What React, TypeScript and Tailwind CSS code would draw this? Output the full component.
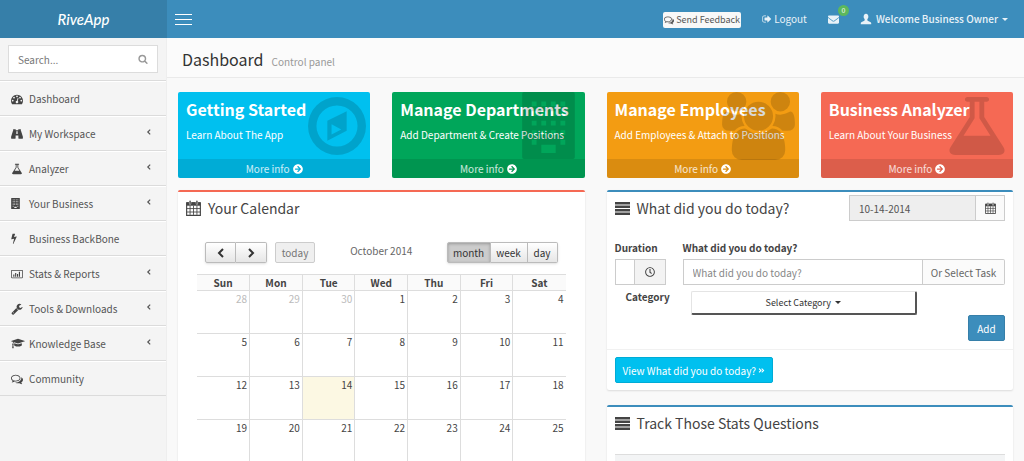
import type { ReactNode } from "react";
import { FaAngleDoubleRight, FaArrowCircleRight, FaEnvelope, FaRegClock } from "react-icons/fa";

const PATHS = {
  tachometer:
    "M384 1152q0-53-37.5-90.5t-90.5-37.5-90.5 37.5-37.5 90.5 37.5 90.5 90.5 37.5 90.5-37.5 37.5-90.5zm192-448q0-53-37.5-90.5t-90.5-37.5-90.5 37.5-37.5 90.5 37.5 90.5 90.5 37.5 90.5-37.5 37.5-90.5zm428 481l101-382q6-26-7.5-48.5t-38.5-29.5-48 6.5-30 39.5l-101 382q-60 5-107 43.5t-63 98.5q-20 77 20 146t117 89 146-20 89-117q16-60-6-117t-72-91zm660-33q0-53-37.5-90.5t-90.5-37.5-90.5 37.5-37.5 90.5 37.5 90.5 90.5 37.5 90.5-37.5 37.5-90.5zm-640-640q0-53-37.5-90.5t-90.5-37.5-90.5 37.5-37.5 90.5 37.5 90.5 90.5 37.5 90.5-37.5 37.5-90.5zm448 192q0-53-37.5-90.5t-90.5-37.5-90.5 37.5-37.5 90.5 37.5 90.5 90.5 37.5 90.5-37.5 37.5-90.5zm320 448q0 261-141 483-19 29-54 29h-1402q-35 0-54-29-141-221-141-483 0-182 71-348t191-286 286-191 348-71 348 71 286 191 191 286 71 348z",
  binoculars:
    "M320 192h384v160h384v-160h384v210q30 20 44 70l260 820v244q0 64-64 64h-544q-64 0-64-64v-416h-416v416q0 64-64 64h-544q-64 0-64-64v-244l260-820q14-50 44-70zM800 480v400h192v-400z",
  flask:
    "M1591 1448q56 89 21.5 152.5t-140.5 63.5h-1152q-106 0-140.5-63.5t21.5-152.5l503-793v-399h-64q-26 0-45-19t-19-45 19-45 45-19h512q26 0 45 19t19 45-19 45-45 19h-64v399zm-779-725l-272 429h712l-272-429-20-31v-436h-128v436z",
  bolt: "M1333 566q18 20 7 44l-540 1157q-13 25-42 25-4 0-14-2-17-5-25.5-19t-4.5-30l197-808-406 101q-4 1-12 1-18 0-31-11-18-15-13-39l201-825q4-14 16-23t28-9h328q19 0 32 12.5t13 29.5q0 8-5 18l-171 463 396-98q8-2 12-2 19 0 34 15z",
  chart:
    "M160 256h1728q66 0 113 47t47 113v1088q0 66-47 113t-113 47h-1728q-66 0-113-47t-47-113v-1088q0-66 47-113t113-47zM160 384q-32 0-32 32v1088q0 32 32 32h1728q32 0 32-32v-1088q0-32-32-32zM384 1056h192v352h-192zM704 800h192v608h-192zM1024 960h192v448h-192zM1344 576h192v832h-192z",
  wrench:
    "M448 1472q0-26-19-45t-45-19-45 19-19 45 19 45 45 19 45-19 19-45zm644-420l-682 682q-37 37-90 37-52 0-91-37l-106-108q-38-36-38-90 0-53 38-91l681-681q39 98 114.5 173.5t173.5 114.5zm634-435q0 39-23 106-47 134-164.5 217.5t-258.5 83.5q-185 0-316.5-131.5t-131.5-316.5 131.5-316.5 316.5-131.5q58 0 121.5 16.5t107.5 46.5q16 11 16 28t-16 28l-293 169v224l193 107q5-3 79-48.5t135.5-81 70.5-35.5q15 0 23.5 10t8.5 25z",
  graduation:
    "M1774 836l18 316q4 69-82 128t-235 93.5-323 34.5-323-34.5-235-93.5-82-128l18-316 574 181q22 7 48 7t48-7zm530-324q0 23-22 31l-1120 352q-4 1-10 1t-10-1l-652-206q-43 34-71 111.5t-34 178.5q63 36 63 109 0 69-58 107l58 433q2 14-8 25-9 11-24 11h-192q-15 0-24-11-10-11-8-25l58-433q-58-38-58-107 0-73 65-111 11-207 98-330l-333-104q-22-8-22-31t22-31l1120-352q4-1 10-1t10 1l1120 352q22 8 22 31z",
  comments:
    "M704 384q-153 0-286 52t-211.5 141-78.5 191q0 82 53 158t149 132l97 56-35 84q34-20 62-39l44-31 53 10q78 14 153 14 153 0 286-52t211.5-141 78.5-191-78.5-191-211.5-141-286-52zm0-128q191 0 353.5 68.5t256.5 186.5 94 257-94 257-256.5 186.5-353.5 68.5q-86 0-176-16-124 88-278 128-36 9-86 16h-3q-11 0-20.5-8t-11.5-21q-1-3-1-6.5t.5-6.5 2-6l2.5-5 3.5-5.5 4-5 4.5-5 4-4.5q5-6 23-25t26-29.5 22.5-29 25-38.5 20.5-44q-124-72-195-177t-71-224q0-139 94-257t256.5-186.5 353.5-68.5zm822 1169q10 24 20.5 44t25 38.5 22.5 29 26 29.5 23 25q1 1 4 4.5t4.5 5 4 5 3.5 5.5l2.5 5 2 6 .5 6.5-1 6.5q-3 14-13 22t-22 7q-50-7-86-16-154-40-278-128-90 16-176 16-271 0-472-132 58 4 88 4 161 0 309-45t264-129q125-92 192-212t67-254q0-77-23-152 129 71 204 178t75 230q0 120-71 224.5t-195 176.5z",
  search:
    "M1216 832q0-185-131.5-316.5t-316.5-131.5-316.5 131.5-131.5 316.5 131.5 316.5 316.5 131.5 316.5-131.5 131.5-316.5zm512 832q0 52-38 90t-90 38q-54 0-90-38l-343-342q-179 124-399 124-143 0-273.5-55.5t-225-150-150-225-55.5-273.5 55.5-273.5 150-225 225-150 273.5-55.5 273.5 55.5 225 150 150 225 55.5 273.5q0 220-124 399l343 343q37 37 37 90z",
  signOut:
    "M704 1440q0 4 1 20t.5 26.5-3 23.5-10 19.5-20.5 6.5h-320q-119 0-203.5-84.5t-84.5-203.5v-704q0-119 84.5-203.5t203.5-84.5h320q13 0 22.5 9.5t9.5 22.5q0 4 1 20t.5 26.5-3 23.5-10 19.5-20.5 6.5h-320q-66 0-113 47t-47 113v704q0 66 47 113t113 47h312l11.5 1 11.5 3 8 5.5 7 9 2 13.5zm928-544q0 26-19 45l-544 544q-19 19-45 19t-45-19-19-45v-288h-448q-26 0-45-19t-19-45v-384q0-26 19-45t45-19h448v-288q0-26 19-45t45-19 45 19l544 544q19 19 19 45z",
  users:
    "M593 896q-162 5-265 128h-134q-82 0-138-40.5t-56-118.5q0-353 124-353 6 0 43.5 21t97.5 42.5 119 21.5q67 0 133-23-5 37-5 66 0 139 81 256zm1071 637q0 120-73 189.5t-194 69.5h-874q-121 0-194-69.5t-73-189.5q0-53 3.5-103.5t14-109 26.5-108.5 43-97.5 62-81 85.5-53.5 111.5-20q10 0 43 21.5t73 48 107 48 135 21.5 135-21.5 107-48 73-48 43-21.5q61 0 111.5 20t85.5 53.5 62 81 43 97.5 26.5 108.5 14 109 3.5 103.5zm-1024-1277q0 106-75 181t-181 75-181-75-75-181 75-181 181-75 181 75 75 181zm704 384q0 159-112.5 271.5t-271.5 112.5-271.5-112.5-112.5-271.5 112.5-271.5 271.5-112.5 271.5 112.5 112.5 271.5zm576 225q0 78-56 118.5t-138 40.5h-134q-103-123-265-128 81-117 81-256 0-29-5-66 66 23 133 23 59 0 119-21.5t97.5-42.5 43.5-21q124 0 124 353zm-128-609q0 106-75 181t-181 75-181-75-75-181 75-181 181-75 181 75 75 181z",
  compass:
    "M128 896a768 768 0 1 0 1536 0a768 768 0 1 0-1536 0zM352 896a544 544 0 1 1 1088 0a544 544 0 1 1-1088 0zM1152 504v520l-512 264v-528zM752 850v270l256-132z",
  bust: "M896 128q180 0 272 120t80 300q-10 150-60 250t-92 150v150q20 60 200 130t300 150q80 60 80 180v106h-1560v-106q0-120 80-180 120-80 300-150t200-130v-150q-42-50-92-150t-60-250q-12-180 80-300t272-120z",
};

type Glyph = keyof typeof PATHS;

function Icon({ name, className, viewBox = "0 0 1792 1792" }: { name: Glyph; className: string; viewBox?: string }) {
  return (
    <svg viewBox={viewBox} className={className} fill="currentColor" fillRule="evenodd" aria-hidden="true">
      <path d={PATHS[name]} />
    </svg>
  );
}

function Building({ className }: { className: string }) {
  const columns = [256, 512, 768, 1024];
  const rows = [256, 512, 768, 1024, 1280];
  const windows = rows.flatMap((y) =>
    columns.filter((x) => y < 1280 || x === 256 || x === 1024).map((x) => `M${x} ${y}h128v128h-128z`),
  );
  return (
    <svg viewBox="0 0 1408 1792" className={className} fill="currentColor" fillRule="evenodd" aria-hidden="true">
      <path d={`M48 0h1312q48 0 48 48v1696q0 48-48 48h-1312q-48 0-48-48v-1696q0-48 48-48zM512 1408h384v224h-384z${windows.join("")}`} />
    </svg>
  );
}

function CalendarIcon({ className }: { className: string }) {
  return (
    <svg viewBox="0 0 26 28" className={className} aria-hidden="true">
      <path fill="none" stroke="currentColor" strokeWidth="2" d="M1 5h24v22H1z" />
      <path fill="none" stroke="currentColor" strokeWidth="1.500" d="M1 15h24M1 21h24M7 10v16M13 10v16M19 10v16" />
      <path fill="currentColor" d="M1 4h24v6H1z" />
      <path stroke="#fff" strokeWidth="4" strokeLinecap="round" d="M7 3v3M19 3v3" />
      <path stroke="currentColor" strokeWidth="2.500" strokeLinecap="round" d="M7 2v4M19 2v4" />
    </svg>
  );
}

function Bars({ className }: { className: string }) {
  return (
    <svg viewBox="0 0 15 13" className={className} fill="currentColor" aria-hidden="true">
      <path d="M0 0h15v2.500H0zM0 3.500h15v2.500H0zM0 7h15v2.500H0zM0 10.500h15v2.500H0z" />
    </svg>
  );
}

function Chevron({ right = false, className }: { right?: boolean; className: string }) {
  return (
    <svg viewBox="0 0 10 10" className={className} fill="none" stroke="currentColor" strokeWidth="2" aria-hidden="true">
      <path d={right ? "M3 1l4 4-4 4" : "M7 1L3 5l4 4"} />
    </svg>
  );
}

function Caret() {
  return (
    <svg viewBox="0 0 6 3" className="h-[3px] w-[6px]" fill="currentColor" aria-hidden="true">
      <path d="M0 0h6L3 3z" />
    </svg>
  );
}

const small = "h-3 w-3";
const MENU: { label: string; icon: ReactNode; open?: boolean }[] = [
  { label: "Dashboard", icon: <Icon name="tachometer" className={small} /> },
  { label: "My Workspace", icon: <Icon name="binoculars" className={small} />, open: true },
  { label: "Analyzer", icon: <Icon name="flask" className={small} />, open: true },
  { label: "Your Business", icon: <Building className="h-[11px] w-[9px]" />, open: true },
  { label: "Business BackBone", icon: <Icon name="bolt" viewBox="448 0 896 1792" className="h-[11px] w-[6px]" /> },
  { label: "Stats & Reports", icon: <Icon name="chart" viewBox="0 128 2048 1664" className="h-[10px] w-3" />, open: true },
  { label: "Tools & Downloads", icon: <Icon name="wrench" className={small} />, open: true },
  { label: "Knowledge Base", icon: <Icon name="graduation" viewBox="0 0 2304 1792" className="h-[11px] w-[14px]" />, open: true },
  { label: "Community", icon: <Icon name="comments" className={small} /> },
];

const ghost = "text-black/15";
const CARDS = [
  {
    title: "Getting Started",
    text: "Learn About The App",
    color: "bg-[#00c0ef]",
    icon: <Icon name="compass" viewBox="128 128 1536 1536" className={`${ghost} absolute right-1 top-[5px] h-[58px] w-[58px]`} />,
  },
  {
    title: "Manage Departments",
    text: "Add Department & Create Positions",
    color: "bg-[#00a65a]",
    icon: <Building className={`${ghost} absolute right-[10px] top-0 h-[67px] w-[53px]`} />,
  },
  {
    title: "Manage Employees",
    text: "Add Employees & Attach to Positions",
    color: "bg-[#f39c12]",
    icon: <Icon name="users" viewBox="0 0 1920 1792" className={`${ghost} absolute right-1 top-0 h-[68px] w-[73px]`} />,
  },
  {
    title: "Business Analyzer",
    text: "Learn About Your Business",
    color: "bg-[#f56954]",
    icon: <Icon name="flask" viewBox="128 128 1536 1536" className={`${ghost} absolute right-[7px] top-[5px] h-[58px] w-[58px]`} />,
  },
];

const DAYS = ["Sun", "Mon", "Tue", "Wed", "Thu", "Fri", "Sat"];
const WEEKS = [
  [28, 29, 30, 1, 2, 3, 4],
  [5, 6, 7, 8, 9, 10, 11],
  [12, 13, 14, 15, 16, 17, 18],
  [19, 20, 21, 22, 23, 24, 25],
];

function Panel({ title, icon, accent, tools, children }: { title: string; icon: ReactNode; accent: string; tools?: ReactNode; children: ReactNode }) {
  return (
    <section className={`rounded-xs border-t-2 bg-white shadow-[0_1px_2px_rgba(0,0,0,0.12)] ${accent}`}>
      <div className="flex h-[32px] items-center gap-[7px] px-2">
        <span className="flex w-[15px] justify-center text-[#444]">{icon}</span>
        <h3 className="flex-1 text-[14px]/[20px] text-[#444]">{title}</h3>
        {tools}
      </div>
      {children}
    </section>
  );
}

const calButton = "flex h-[21px] items-center justify-center border-[#bbb] text-[10px]/[19px] text-[#333]";
const raised = "bg-linear-to-b from-white to-[#e6e6e6]";

function Calendar() {
  return (
    <div className="px-[19px] pb-[10px] pt-[18px]">
      <div className="flex items-center justify-between px-2">
        <div className="flex flex-1 gap-2">
          <div className="flex rounded-xs shadow-sm">
            <button type="button" aria-label="Previous month" className={`${calButton} ${raised} w-[31px] rounded-l-xs border`}>
              <Chevron className="h-[10px] w-[10px]" />
            </button>
            <button type="button" aria-label="Next month" className={`${calButton} ${raised} w-[31px] rounded-r-xs border border-l-0`}>
              <Chevron right className="h-[10px] w-[10px]" />
            </button>
          </div>
          <button type="button" className="h-[21px] w-10 rounded-xs border border-[#ccc] bg-[#efefef] text-[10px]/[19px] text-[#777]">
            today
          </button>
        </div>
        <h2 className="pb-1 text-[10px]/[16px] text-[#666]">October 2014</h2>
        <div className="flex flex-1 justify-end">
          <div className="flex rounded-xs shadow-sm">
            <button type="button" className={`${calButton} w-11 rounded-l-xs border bg-[#ccc] shadow-[inset_0_1px_3px_rgba(0,0,0,0.25)]`}>
              month
            </button>
            <button type="button" className={`${calButton} ${raised} w-[37px] border-y border-r`}>
              week
            </button>
            <button type="button" className={`${calButton} ${raised} w-[30px] rounded-r-xs border-y border-r`}>
              day
            </button>
          </div>
        </div>
      </div>
      <table className="mt-[11px] w-full table-fixed border-collapse">
        <thead>
          <tr className="h-4 bg-[#fafafa]">
            {DAYS.map((day) => (
              <th key={day} className="border border-[#ddd] p-0 text-[10px]/[14px] font-bold text-[#444] first:border-l-0 last:border-r-0">
                {day}
              </th>
            ))}
          </tr>
        </thead>
        <tbody>
          {WEEKS.map((week, row) => (
            <tr key={week[0]} className="h-[43px]">
              {week.map((day) => (
                <td
                  key={day}
                  className={`border border-[#ddd] px-[2px] pt-px text-right align-top text-[10px]/[14px] first:border-l-0 last:border-r-0 ${
                    row === 0 && day > 7 ? "text-[#bbb]" : "text-[#444]"
                  } ${row === 2 && day === 14 ? "bg-[#fcf8e3]" : ""}`}
                >
                  {day}
                </td>
              ))}
            </tr>
          ))}
        </tbody>
      </table>
    </div>
  );
}

function TaskForm() {
  return (
    <>
      <div className="flex flex-col px-2 pb-2 pt-4">
        <div className="flex gap-[17px]">
          <div className="w-[51px]">
            <label htmlFor="duration" className="block text-[10px]/[16px] font-bold text-[#444]">
              Duration
            </label>
            <div className="mt-[3px] flex h-[26px]">
              <input id="duration" type="text" className="w-5 min-w-0 border border-[#ccc] bg-white px-1 text-[10px]" />
              <span className="flex flex-1 items-center justify-center border border-l-0 border-[#ccc] bg-[#f3f3f3] text-[#444]">
                <FaRegClock className="h-[10px] w-[10px]" />
              </span>
            </div>
          </div>
          <div className="flex-1">
            <label htmlFor="task" className="block text-[10px]/[16px] font-bold text-[#444]">
              What did you do today?
            </label>
            <div className="mt-[3px] flex h-[26px]">
              <input
                id="task"
                type="text"
                placeholder="What did you do today?"
                className="min-w-0 flex-1 border border-[#ccc] bg-white px-[9px] text-[10px] text-[#555] placeholder:text-[#888]"
              />
              <button type="button" className="w-[82px] rounded-r-xs border border-l-0 border-[#ccc] bg-[#fbfbfb] text-[10px] text-[#666]">
                Or Select Task
              </button>
            </div>
          </div>
        </div>
        <div className="mt-[6px] flex">
          <span id="category-label" className="w-[76px] pl-[11px] text-[10px]/[12px] font-bold text-[#444]">
            Category
          </span>
          <button
            type="button"
            aria-labelledby="category-label"
            className="flex h-[24px] w-[58%] items-center justify-center gap-1 rounded-xs border border-b-2 border-r-2 border-[#e4e4e4] border-b-[#555] border-r-[#555] bg-white text-[9px] text-[#333]"
          >
            Select Category <Caret />
          </button>
        </div>
        <button type="button" className="h-[26px] w-[37px] self-end rounded-xs border border-[#367fa9] bg-[#3c8dbc] text-[10px] text-white">
          Add
        </button>
      </div>
      <div className="border-t border-[#f1f1f1] px-2 py-[7px]">
        <button type="button" className="flex h-[26px] items-center gap-[2px] whitespace-nowrap rounded-xs border border-[#00acd6] bg-[#00c0ef] px-[7px] text-[10px] text-white">
          View What did you do today? <FaAngleDoubleRight className="h-[7px] w-[7px]" />
        </button>
      </div>
    </>
  );
}

export default function App() {
  return (
    <div className="flex min-h-screen flex-col bg-[#f9f9f9] font-['Noto_Sans_CJK_SC','Open_Sans',sans-serif] text-[#444]">
      <header className="flex h-[38px] shrink-0 bg-[#3c8dbc] text-[#e8f2f8]">
        <a href="#home" className="flex w-[167px] items-center justify-center bg-[#367fa9] font-['Lato',sans-serif] text-[15px] font-medium italic text-white">
          RiveApp
        </a>
        <nav className="flex flex-1 items-center justify-between pl-2 pr-4 text-[10px]/[16px]">
          <button type="button" aria-label="Toggle navigation" className="flex w-[17px] flex-col gap-1">
            <span className="h-px w-full bg-white" />
            <span className="h-px w-full bg-white" />
            <span className="h-px w-full bg-white" />
          </button>
          <div className="flex items-center whitespace-nowrap">
            <button type="button" className="mt-[2px] flex h-4 w-[78px] items-center justify-center gap-[2px] rounded-xs bg-[#f8f8f8] text-[9px] text-[#555]">
              <Icon name="comments" className="h-[10px] w-[10px]" /> Send Feedback
            </button>
            <a href="#logout" className="ml-[21px] flex items-center gap-[2px]">
              <Icon name="signOut" className="h-[10px] w-[10px]" /> Logout
            </a>
            <a href="#messages" aria-label="Messages" className="relative ml-[21px]">
              <FaEnvelope className="h-[11px] w-[11px]" />
              <span className="absolute -right-[10px] -top-[9px] flex h-[11px] w-[11px] items-center justify-center rounded-full bg-[#5cb85c] text-[7px]/[11px] text-white">0</span>
            </a>
            <button type="button" className="ml-[21px] flex items-center gap-1 font-medium">
              <Icon name="bust" className="h-3 w-3" /> Welcome Business Owner <Caret />
            </button>
          </div>
        </nav>
      </header>
      <div className="flex flex-1">
        <aside className="w-[167px] shrink-0 border-r border-[#eee] bg-[#f4f4f4]">
          <form className="mx-2 my-[7px] flex h-[28px] items-center border border-[#dcdcdc] bg-white px-[9px]">
            <input type="text" aria-label="Search" placeholder="Search..." className="min-w-0 flex-1 text-[10px] outline-none placeholder:text-[#777]" />
            <button type="submit" aria-label="Search" className="text-[#999]">
              <Icon name="search" className="h-[10px] w-[10px]" />
            </button>
          </form>
          <ul className="border-t border-[#dbdbdb]">
            {MENU.map((item) => (
              <li key={item.label} className="border-b border-t border-b-[#dbdbdb] border-t-white">
                <a href="#menu" className="flex h-[33px] items-center pl-[11px] pr-[14px] text-[10px]/[16px] text-[#555]">
                  <span className="flex w-[18px] text-[#444]">{item.icon}</span>
                  <span className="flex-1">{item.label}</span>
                  {item.open && <Chevron className="mb-[3px] h-[6px] w-[6px]" />}
                </a>
              </li>
            ))}
          </ul>
        </aside>
        <main className="min-w-0 flex-1">
          <div className="flex h-[40px] items-baseline gap-2 border-b border-[#eaeaea] bg-[#fbfbfb] px-[15px] pt-[9px]">
            <h1 className="text-[16px]/[24px] text-[#333]">Dashboard</h1>
            <small className="text-[10px]/[16px] text-[#999]">Control panel</small>
          </div>
          <div className="flex flex-col gap-3 px-[11px] pt-[14px]">
            <div className="grid grid-cols-4 gap-[22px]">
              {CARDS.map((card) => (
                <article key={card.title} className={`relative overflow-hidden rounded-xs text-white ${card.color}`}>
                  <div className="h-[67px] whitespace-nowrap px-2 pt-[5px]">
                    <h3 className="text-[16px]/[24px] font-bold">{card.title}</h3>
                    <p className="mt-[6px] text-[10px]/[16px]">{card.text}</p>
                  </div>
                  {card.icon}
                  <a href="#more" className="relative flex h-[19px] items-center justify-center gap-[3px] bg-black/10 text-[10px]/[16px] text-white/80">
                    More info <FaArrowCircleRight className="h-[10px] w-[10px] text-white" />
                  </a>
                </article>
              ))}
            </div>
            <div className="grid grid-cols-2 items-start gap-[22px]">
              <Panel title="Your Calendar" accent="border-[#f56954]" icon={<CalendarIcon className="h-4 w-[15px]" />}>
                <Calendar />
              </Panel>
              <div className="flex flex-col gap-[15px]">
                <Panel
                  title="What did you do today?"
                  accent="border-[#3c8dbc]"
                  icon={<Bars className="h-[13px] w-[15px]" />}
                  tools={
                    <div className="flex h-[26px] w-[156px]">
                      <input type="text" aria-label="Date" readOnly defaultValue="10-14-2014" className="min-w-0 flex-1 border border-[#ccc] bg-[#eee] px-[9px] text-[10px] text-[#555]" />
                      <button type="button" aria-label="Pick a date" className="flex w-[29px] items-center justify-center border border-l-0 border-[#ccc] bg-[#fafafa] text-[#444]">
                        <CalendarIcon className="h-[12px] w-[11px]" />
                      </button>
                    </div>
                  }
                >
                  <TaskForm />
                </Panel>
                <Panel title="Track Those Stats Questions" accent="border-[#3c8dbc]" icon={<Bars className="h-[13px] w-[15px]" />}>
                  <div className="px-2 pt-[15px]">
                    <div className="h-4 border-t border-[#ddd] bg-[#f3f4f5]" />
                  </div>
                </Panel>
              </div>
            </div>
          </div>
        </main>
      </div>
    </div>
  );
}
